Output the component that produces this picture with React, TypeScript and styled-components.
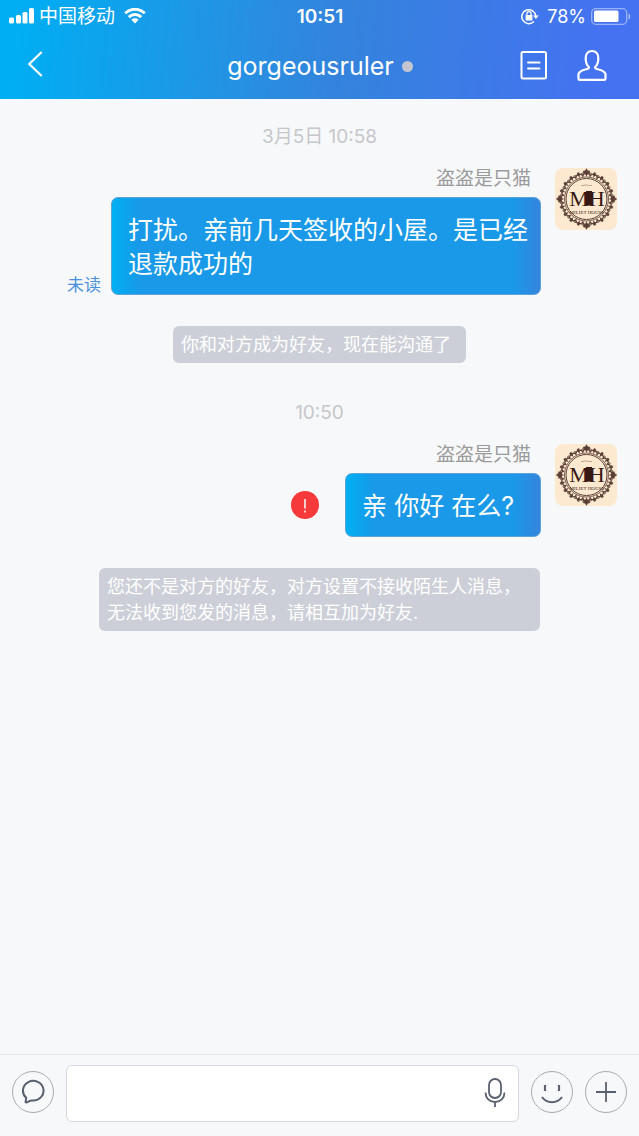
import React from "react";
import styled, { createGlobalStyle } from "styled-components";

const GlobalStyle = createGlobalStyle`
  * { box-sizing: border-box; }
  body {
    margin: 0;
    background: #f7f8fa;
    font-family: Inter, "Noto Sans CJK SC", sans-serif;
    color: #ffffff;
  }
  button, input { font: inherit; }
`;

const Screen = styled.div`
  min-height: 100vh;
  display: flex;
  flex-direction: column;
`;

const Header = styled.header`
  background: linear-gradient(95deg, #00aef3 3%, #2492e3 36%, #3384dc 52%, #4572f1 94%);
`;

const StatusBar = styled.div`
  display: grid;
  grid-template-columns: 1fr auto 1fr;
  align-items: center;
  height: 33px;
  padding: 0 8px 0 9px;
  font-size: 18px;
  line-height: 24px;
`;

const StatusGroup = styled.div<{ $end?: boolean }>`
  display: flex;
  align-items: center;
  justify-content: ${(p) => (p.$end ? "flex-end" : "flex-start")};
  gap: 5px;
`;

const Carrier = styled.span`
  margin-right: 4px;
  font-size: 19px;
`;

const BatteryLevel = styled.span`
  margin-left: 3px;
`;

const Clock = styled.time`
  font-size: 19px;
  font-weight: 600;
`;

const NavBar = styled.nav`
  display: grid;
  grid-template-columns: 1fr auto 1fr;
  align-items: center;
  height: 66px;
  padding: 0 32px 0 28px;
`;

const IconButton = styled.button`
  display: inline-flex;
  align-items: center;
  justify-content: center;
  padding: 0;
  border: 0;
  background: none;
  color: inherit;
  cursor: pointer;
`;

const NavActions = styled.div`
  display: flex;
  justify-content: flex-end;
  gap: 30px;
`;

const Title = styled.h1`
  display: flex;
  align-items: center;
  gap: 8px;
  margin: 0;
  padding-left: 5px;
  font-size: 25px;
  line-height: 32px;
  font-weight: 400;
`;

const PresenceDot = styled.span`
  width: 11px;
  height: 11px;
  border-radius: 50%;
  background: #c3c6d0;
`;

const Conversation = styled.main`
  flex: 1;
  display: flex;
  flex-direction: column;
  padding: 26px 22px 30px;
`;

const Timestamp = styled.time`
  align-self: center;
  margin-bottom: 19px;
  color: #c6c7ca;
  font-size: 19px;
  line-height: 24px;
`;

const MessageRow = styled.article`
  display: flex;
  justify-content: flex-end;
  gap: 14px;
  margin-bottom: 31px;
`;

const MessageBody = styled.div`
  display: flex;
  flex-direction: column;
  align-items: flex-end;
`;

const Sender = styled.span`
  padding-right: 10px;
  color: #9b9b9b;
  font-size: 19px;
  line-height: 21px;
  margin-bottom: 8px;
`;

const BubbleLine = styled.div<{ $center?: boolean }>`
  display: flex;
  align-items: ${(p) => (p.$center ? "center" : "flex-end")};
  gap: ${(p) => (p.$center ? 26 : 10)}px;
`;

const Bubble = styled.p`
  max-width: 430px;
  margin: 0;
  padding: 15px 12px 13px 16px;
  border: 1px solid #5ea3d8;
  border-radius: 7px;
  background: linear-gradient(
    to right,
    #00aff2,
    #1999e8 28px,
    #1999e8 calc(100% - 28px),
    #3485dc
  );
  font-size: 25px;
  line-height: 34px;
`;

const Unread = styled.span`
  color: #4a90dc;
  font-size: 17px;
  line-height: 20px;
`;

const Notice = styled.p`
  align-self: center;
  max-width: 441px;
  margin: 0 0 38px;
  padding: 6px 15px 5px 8px;
  border-radius: 6px;
  background: #cdcfd8;
  font-size: 18px;
  line-height: 26px;
`;

const Composer = styled.form`
  position: sticky;
  bottom: 0;
  display: flex;
  align-items: flex-start;
  gap: 12px;
  padding: 10px 12px 14px;
  border-top: 1px solid #e5e7ea;
  background: #f7f8fa;
  color: #596070;
`;

const RoundButton = styled(IconButton)`
  flex: none;
  width: 42px;
  height: 42px;
  margin-top: 6px;
  border: 1px solid #aaacb0;
  border-radius: 50%;
`;

const InputBox = styled.div`
  flex: 1;
  display: flex;
  align-items: center;
  min-width: 0;
  height: 57px;
  padding-right: 12px;
  border: 1px solid #d5d8df;
  border-radius: 6px;
  background: #ffffff;
`;

const TextInput = styled.input`
  flex: 1;
  min-width: 0;
  height: 100%;
  padding: 0 12px;
  border: 0;
  outline: 0;
  background: transparent;
  color: #333333;
  font-size: 25px;
`;

const AvatarArt = styled.svg`
  flex: none;
  border-radius: 8px;
`;

const ORNAMENT_COUNT = 20;

function Avatar() {
  const ink = "#5a4036";
  return (
    <AvatarArt width="62" height="62" viewBox="0 0 62 62" role="img" aria-label="Miliet House">
      <rect width="62" height="62" fill="#fde9d0" />
      <g transform="translate(31.5 31)" stroke={ink} fill="none">
        <circle r="22" strokeWidth="0.8" />
        <circle r="20.500" strokeWidth="1" />
        {Array.from({ length: ORNAMENT_COUNT }, (_, i) => (
          <g key={i} transform={`rotate(${(i * 360) / ORNAMENT_COUNT})`}>
            <path d="M-3.800-22.500c.5-3 3-4 3.800-1.500.8-2.500 3.300-1.500 3.800 1.500" strokeWidth="1.200" />
            <circle cx="0" cy="-26.300" r="1.400" fill={ink} strokeWidth="0.300" />
            <circle cx="3.900" cy="-25" r="1" strokeWidth="0.900" />
          </g>
        ))}
        {[0, 90, 180, 270].map((a) => (
          <path
            key={a}
            transform={`rotate(${a})`}
            d="M0-30.500l1.200 2 2.300.8-.5 2L0-24.500l-3-1.200-.5-2 2.300-.8z"
            fill={ink}
            strokeWidth="0.300"
          />
        ))}
      </g>
      <path d="M26 17.500h3l2-.8 2 .8h4" stroke="#a08b7b" strokeWidth="0.700" fill="none" />
      <g fill="#381812" fontFamily="Liberation Serif, serif" textAnchor="middle">
        <text x="32" y="37.500" fontSize="22">MH</text>
        <path d="M31 23h6v14.500h-6z" />
        <text x="32" y="46" fontSize="5">MILIET HOUSE</text>
      </g>
    </AvatarArt>
  );
}

function SignalIcon() {
  return (
    <svg width="25" height="17" viewBox="0 0 25 17" fill="#fff" aria-hidden="true">
      <rect x="0" y="9.500" width="5" height="6" rx="1.500" />
      <rect x="7" y="7" width="5" height="8.500" rx="1.500" />
      <rect x="13.500" y="4" width="5" height="11.500" rx="1.500" />
      <rect x="20" y="0" width="5" height="15.500" rx="1.500" />
    </svg>
  );
}

function WifiIcon() {
  return (
    <svg width="22" height="17" viewBox="0 0 22 17" aria-hidden="true">
      <g fill="none" stroke="#fff" strokeWidth="3">
        <path d="M1.200 5.300a14 14 0 0 1 19.600 0" />
        <path d="M4.800 9.100a9 9 0 0 1 12.400 0" />
      </g>
      <path d="M7.300 11.700a5.400 5.400 0 0 1 7.400 0L11 15.500z" fill="#fff" />
    </svg>
  );
}

function RotationLockIcon() {
  return (
    <svg width="18" height="18" viewBox="0 0 18 18" aria-hidden="true">
      <path d="M12.900 13.500A7 7 0 1 1 14.800 8" fill="none" stroke="#fff" strokeWidth="1.500" />
      <path d="M12 7.600h5.800L14.900 11z" fill="#fff" />
      <rect x="4.600" y="7" width="6.800" height="5.500" rx="0.600" fill="#fff" />
      <path d="M5.900 7.300V5.700a2.100 2.100 0 0 1 4.200 0v1.600" fill="none" stroke="#fff" strokeWidth="1.200" />
    </svg>
  );
}

function BatteryIcon() {
  return (
    <svg width="40" height="18" viewBox="0 0 40 18" aria-hidden="true">
      <rect x="0.700" y="0.700" width="35" height="15.600" rx="4" fill="none" stroke="#fff" strokeOpacity="0.450" strokeWidth="1.300" />
      <rect x="3" y="2.500" width="24.500" height="11.500" rx="1.500" fill="#fff" />
      <path d="M37.500 5.500c2.300 1 2.300 5 0 6z" fill="#fff" fillOpacity="0.550" />
    </svg>
  );
}

function OutgoingMessage({
  sender,
  status,
  centered,
  children,
}: {
  sender: string;
  status: React.ReactNode;
  centered?: boolean;
  children: React.ReactNode;
}) {
  return (
    <MessageRow>
      <MessageBody>
        <Sender>{sender}</Sender>
        <BubbleLine $center={centered}>
          {status}
          <Bubble>{children}</Bubble>
        </BubbleLine>
      </MessageBody>
      <Avatar />
    </MessageRow>
  );
}

export default function App() {
  return (
    <Screen>
      <GlobalStyle />
      <Header>
        <StatusBar>
          <StatusGroup>
            <SignalIcon />
            <Carrier>中国移动</Carrier>
            <WifiIcon />
          </StatusGroup>
          <Clock>10:51</Clock>
          <StatusGroup $end>
            <RotationLockIcon />
            <BatteryLevel>78%</BatteryLevel>
            <BatteryIcon />
          </StatusGroup>
        </StatusBar>
        <NavBar>
          <div>
            <IconButton type="button" aria-label="返回">
              <svg width="15" height="30" viewBox="0 0 15 30" fill="none" stroke="#fff" strokeWidth="2.200">
                <path d="M13.700 3L1.200 15l12.500 12" />
              </svg>
            </IconButton>
          </div>
          <Title>
            gorgeousruler
            <PresenceDot />
          </Title>
          <NavActions>
            <IconButton type="button" aria-label="聊天记录">
              <svg width="28" height="32" viewBox="0 0 28 32" fill="none" stroke="#fff" strokeWidth="2">
                <rect x="2.500" y="2" width="24.500" height="26.500" rx="1.500" />
                <path d="M9 12.500h11.500M9 18.500h11.500" strokeLinecap="round" />
              </svg>
            </IconButton>
            <IconButton type="button" aria-label="个人资料">
              <svg width="30" height="34" viewBox="0 0 30 34" fill="none" stroke="#fff" strokeWidth="2.200" strokeLinejoin="round">
                <path d="M15 2c-4 0-6.300 3-6.300 7.500 0 3.800 1.300 7 3.300 8.800-.2 1.200-.6 1.500-1.800 1.700-4 .8-7.700 2-8.700 5v4.200c0 1 .5 1.700 1.700 1.700h23.600c1.200 0 1.700-.7 1.700-1.700v-4.200c-1-3-4.700-4.200-8.700-5-1.200-.2-1.600-.5-1.800-1.700 2-1.800 3.300-5 3.300-8.800 0-4.500-2.300-7.500-6.300-7.500z" />
              </svg>
            </IconButton>
          </NavActions>
        </NavBar>
      </Header>

      <Conversation>
        <Timestamp>3月5日 10:58</Timestamp>
        <OutgoingMessage sender="盗盗是只猫" status={<Unread>未读</Unread>}>
          打扰。亲前几天签收的小屋。是已经退款成功的
        </OutgoingMessage>
        <Notice>你和对方成为好友，现在能沟通了</Notice>

        <Timestamp>10:50</Timestamp>
        <OutgoingMessage
          sender="盗盗是只猫"
          centered
          status={
            <IconButton type="button" aria-label="重新发送">
              <svg width="28" height="28" viewBox="0 0 28 28">
                <circle cx="14" cy="14" r="14" fill="#f63a3b" />
                <path d="M14 8v9.500M14 19.500v2" stroke="#fff" strokeWidth="1.500" />
              </svg>
            </IconButton>
          }
        >
          {"亲 你好 在么?\u00a0\u00a0"}
        </OutgoingMessage>
        <Notice>您还不是对方的好友，对方设置不接收陌生人消息，无法收到您发的消息，请相互加为好友.</Notice>
      </Conversation>

      <Composer onSubmit={(e) => e.preventDefault()}>
        <RoundButton type="button" aria-label="快捷短语">
          <svg width="26" height="26" viewBox="0 0 26 26" fill="none" stroke="currentColor" strokeWidth="2" strokeLinejoin="round">
            <path d="M6.200 18.800A10.300 9.800 0 1 1 12 21.400c-2.200-.2-3.500 1.600-5.700 2.100-.5.100-.8-.2-.7-.7z" />
          </svg>
        </RoundButton>
        <InputBox>
          <TextInput type="text" aria-label="输入消息" />
          <IconButton type="button" aria-label="语音输入">
            <svg width="22" height="32" viewBox="0 0 22 32" fill="none" stroke="currentColor" strokeWidth="1.800">
              <rect x="5" y="1" width="12" height="19" rx="6" />
              <path d="M1.500 14.500c0 5.500 4 9.500 9.500 9.500s9.500-4 9.500-9.500M11 24v5" />
            </svg>
          </IconButton>
        </InputBox>
        <RoundButton type="button" aria-label="表情">
          <svg width="26" height="26" viewBox="0 0 26 26" fill="none" stroke="currentColor" strokeWidth="2">
            <path d="M6 6v6M20 6v6" strokeWidth="2.200" />
            <path d="M3 18c5 7 15 7 20 0" />
          </svg>
        </RoundButton>
        <RoundButton type="button" aria-label="更多">
          <svg width="22" height="22" viewBox="0 0 22 22" fill="none" stroke="currentColor" strokeWidth="1.800">
            <path d="M11 1v20M1 11h20" />
          </svg>
        </RoundButton>
      </Composer>
    </Screen>
  );
}
